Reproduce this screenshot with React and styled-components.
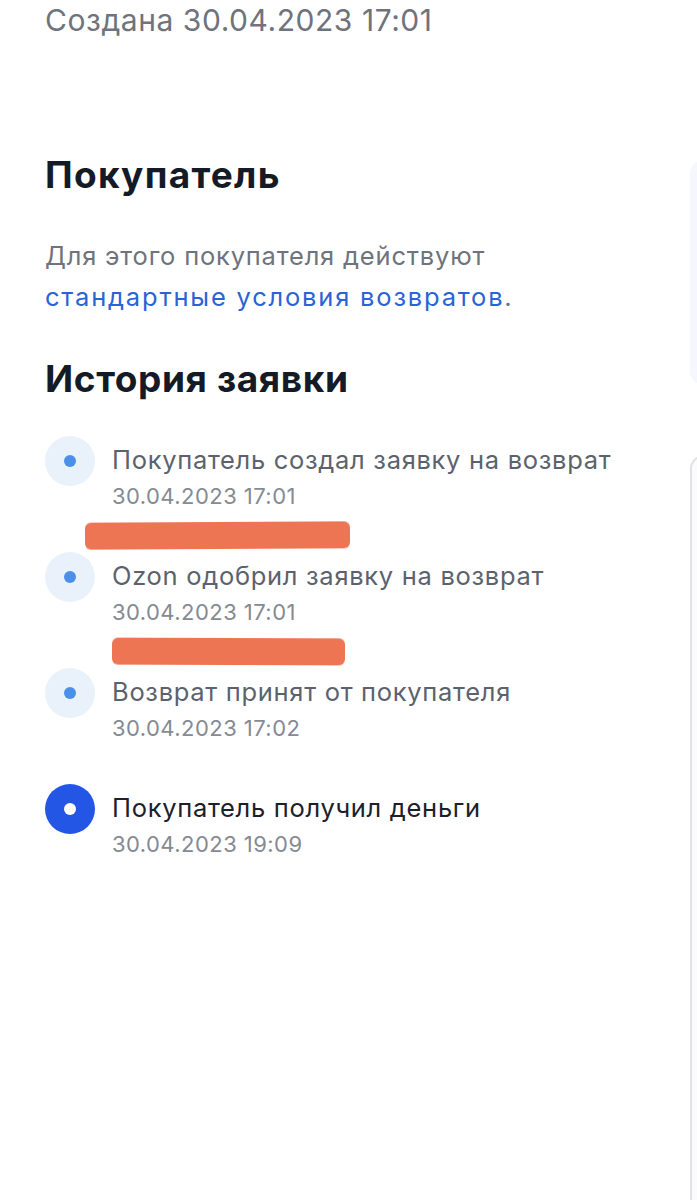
import styled, { createGlobalStyle } from "styled-components";

const GlobalStyle = createGlobalStyle`
  body {
    margin: 0;
    background: #fff;
    font-family: Inter, "Noto Sans", sans-serif;
  }
`;

const Page = styled.div`
  display: flex;
  width: 697px;
  height: 1200px;
  overflow: hidden;
  background: #fff;
`;

const Main = styled.main`
  flex: 0 0 690px;
  padding: 0 0 0 45px;
  box-sizing: border-box;
`;

const Side = styled.aside`
  flex: 0 0 200px;
  display: flex;
  flex-direction: column;
  gap: 70px;
  padding-top: 160px;
`;

const SidePanel = styled.div`
  flex-shrink: 0;
  height: ${(p) => p.$height};
  border-radius: 14px;
  background: ${(p) => (p.$muted ? "#fbfbfc" : "#f6f7fc")};
  border: ${(p) => (p.$muted ? "2px solid #e3e3e7" : "none")};
`;

const Created = styled.div`
  font-size: 30px;
  line-height: 40px;
  letter-spacing: 0.55px;
  color: #6e737c;
`;

const Heading = styled.h2`
  margin: ${(p) => p.$top} 0 0;
  font-size: 37px;
  line-height: 44px;
  font-weight: 700;
  letter-spacing: ${(p) => p.$spacing};
  color: #141a26;
`;

const Text = styled.p`
  margin: 38px 0 0;
  font-size: 25.5px;
  line-height: 41px;
  letter-spacing: 0.8px;
  color: #6e737c;
`;

const Link = styled.a`
  color: #2a63d6;
  text-decoration: none;
  letter-spacing: 1.8px;
`;

const Timeline = styled.ul`
  list-style: none;
  margin: 35px 0 0;
  padding: 0;
`;

const Item = styled.li`
  display: grid;
  grid-template-columns: 50px 1fr;
  column-gap: 17px;
  height: 116px;
`;

const Dot = styled.span`
  width: 50px;
  height: 50px;
  border-radius: 50%;
  display: flex;
  align-items: center;
  justify-content: center;
  background: ${(p) => (p.$active ? "#2456e6" : "#e9f1fb")};

  &::after {
    content: "";
    width: 12px;
    height: 12px;
    border-radius: 50%;
    background: ${(p) => (p.$active ? "#fff" : "#4b8fe9")};
  }
`;

const Body = styled.div`
  padding-top: 6px;
`;

const Title = styled.div`
  font-size: 25.5px;
  line-height: 36px;
  letter-spacing: 0.7px;
  color: ${(p) => (p.$active ? "#1b202b" : "#5c626d")};
`;

const Date = styled.div`
  font-size: 22px;
  line-height: 36px;
  letter-spacing: 0.45px;
  color: #858a93;
`;

const Redaction = styled.div`
  width: ${(p) => p.$width}px;
  height: 27px;
  margin: 8px 0 0 ${(p) => p.$shift}px;
  border-radius: 6px;
  background: #ee7554;
  filter: blur(0.6px);
  transform: rotate(${(p) => p.$tilt}deg);
`;

const events = [
  {
    title: "Покупатель создал заявку на возврат",
    date: "30.04.2023 17:01",
    mark: { width: 265, shift: -27, tilt: -0.3 },
  },
  {
    title: "Ozon одобрил заявку на возврат",
    date: "30.04.2023 17:01",
    mark: { width: 233, shift: 0, tilt: 0.2 },
  },
  { title: "Возврат принят от покупателя", date: "30.04.2023 17:02" },
  { title: "Покупатель получил деньги", date: "30.04.2023 19:09", active: true },
];

const App = () => {
  return (
    <Page>
      <GlobalStyle />
      <Main>
        <Created>Создана 30.04.2023 17:01</Created>
        <Heading $top="113px" $spacing="1.3px">
          Покупатель
        </Heading>
        <Text>
          Для этого покупателя действуют
          <br />
          <Link href="#">стандартные условия возвратов</Link>.
        </Text>
        <Heading $top="40px" $spacing="0.6px">
          История заявки
        </Heading>
        <Timeline>
          {events.map((e) => (
            <Item key={e.title}>
              <Dot $active={e.active} />
              <Body>
                <Title $active={e.active}>{e.title}</Title>
                <Date>{e.date}</Date>
                {e.mark && (
                  <Redaction
                    $width={e.mark.width}
                    $shift={e.mark.shift}
                    $tilt={e.mark.tilt}
                  />
                )}
              </Body>
            </Item>
          ))}
        </Timeline>
      </Main>
      <Side>
        <SidePanel $height="225px" />
        <SidePanel $height="900px" $muted />
      </Side>
    </Page>
  );
};

export default App;
